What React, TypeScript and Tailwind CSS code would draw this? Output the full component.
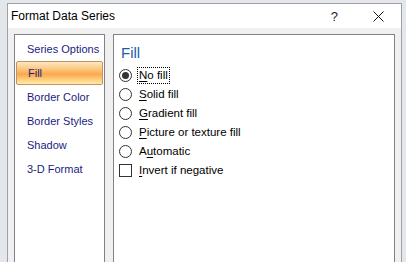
import { useState } from "react";

const CATEGORIES = [
  "Series Options",
  "Fill",
  "Border Color",
  "Border Styles",
  "Shadow",
  "3-D Format",
] as const;

// access key index for each option label
const FILL_OPTIONS = [
  { label: "No fill", key: 0 },
  { label: "Solid fill", key: 0 },
  { label: "Gradient fill", key: 0 },
  { label: "Picture or texture fill", key: 0 },
  { label: "Automatic", key: 1 },
] as const;

const FONT = "font-['Liberation_Sans',Arial,sans-serif]";

function AccessLabel({ text, at }: { text: string; at: number }) {
  return (
    <>
      {text.slice(0, at)}
      <u className="underline-offset-[2px]">{text[at]}</u>
      {text.slice(at + 1)}
    </>
  );
}

function Radio({ checked }: { checked: boolean }) {
  return (
    <span className="flex h-[13px] w-[13px] shrink-0 items-center justify-center rounded-full border border-[#333] bg-white">
      {checked ? <span className="h-[7px] w-[7px] rounded-full bg-[#333]" /> : null}
    </span>
  );
}

export default function App() {
  const [active, setActive] = useState<string>("Fill");
  const [fill, setFill] = useState(0);
  const [invert, setInvert] = useState(false);

  return (
    <div
      className={`h-[262px] w-[406px] overflow-hidden bg-[#e3e6ea] pl-[7px] pt-[3px] ${FONT}`}
    >
      <div className="flex h-[280px] w-[395px] flex-col border border-[#a0a0a0] bg-[#f0f0f0]">
        {/* title bar */}
        <div className="flex h-[24px] shrink-0 items-center bg-white pl-[3px]">
          <span className="flex-1 text-[12px] text-black">Format Data Series</span>
          <span className="mr-[35px] text-[13px] leading-none text-[#222]">?</span>
          <svg width="11" height="11" viewBox="0 0 11 11" className="mr-[17px]">
            <path d="M0.5 0.5 L10.5 10.5 M10.5 0.5 L0.5 10.5" stroke="#111" strokeWidth="1" />
          </svg>
        </div>

        {/* body */}
        <div className="flex flex-1 gap-[8px] px-[6px] pt-[6px]">
          <ul className="flex w-[91px] shrink-0 flex-col border border-[#7f8388] bg-white pt-[2px]">
            {CATEGORIES.map((c) => (
              <li
                key={c}
                onClick={() => setActive(c)}
                className={`mx-[1px] flex h-[24px] cursor-default items-center pl-[11px] text-[11px] text-[#1c1c80] ${
                  active === c
                    ? "rounded-[2px] border border-[#c09466] bg-[linear-gradient(to_bottom,#fde7c2_0%,#fcc47a_35%,#fba84c_55%,#fdd283_82%,#ffeaa6_100%)] pl-[10px]"
                    : ""
                }`}
              >
                {c}
              </li>
            ))}
          </ul>

          <div className="flex flex-1 flex-col border border-[#7f8388] bg-white pl-[5px] pt-[9px]">
            <h2 className="mb-[4px] pl-[2px] text-[15px] leading-[18px] text-[#1a5da8]">Fill</h2>
            {FILL_OPTIONS.map((o, i) => (
              <label
                key={o.label}
                onClick={() => setFill(i)}
                className="flex h-[19px] items-center gap-[5px] text-[11.5px] text-black"
              >
                <Radio checked={fill === i} />
                <span
                  className={`px-[1px] leading-[15px] ${
                    fill === i ? "border border-dotted border-black" : "border border-transparent"
                  }`}
                >
                  <AccessLabel text={o.label} at={o.key} />
                </span>
              </label>
            ))}
            <label
              onClick={() => setInvert(!invert)}
              className="flex h-[19px] items-center gap-[5px] text-[11.5px] text-black"
            >
              <span className="h-[13px] w-[13px] shrink-0 border border-[#333] bg-white" />
              <span className="border border-transparent px-[1px] leading-[15px]">
                <AccessLabel text="Invert if negative" at={0} />
              </span>
            </label>
          </div>
        </div>
      </div>
    </div>
  );
}
